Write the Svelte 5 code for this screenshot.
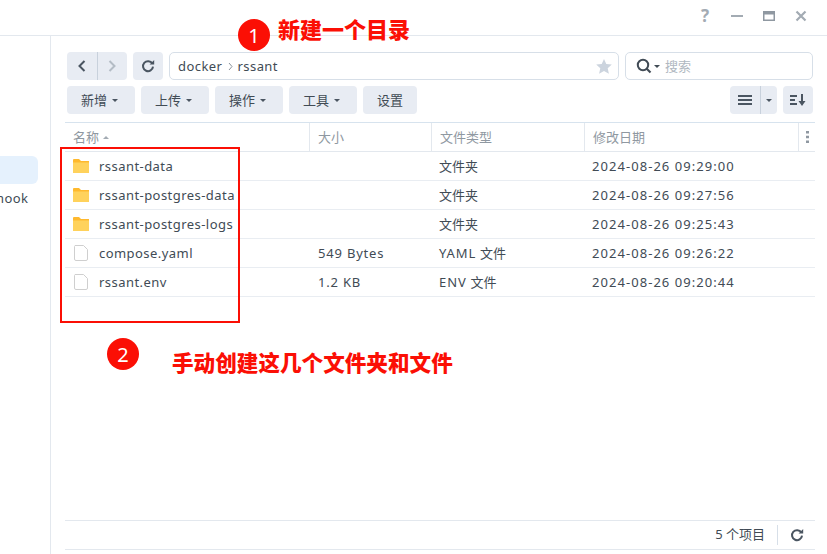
<script>
  const columns = [
    { label: '名称', width: 245, sort: true },
    { label: '大小', width: 122 },
    { label: '文件类型', width: 153 },
    { label: '修改日期', width: 214 }
  ];
  const files = [
    { name: 'rssant-data', size: '', kind: '', type: '文件夹', date: '2024-08-26 09:29:00', folder: true },
    { name: 'rssant-postgres-data', size: '', kind: '', type: '文件夹', date: '2024-08-26 09:27:56', folder: true },
    { name: 'rssant-postgres-logs', size: '', kind: '', type: '文件夹', date: '2024-08-26 09:25:43', folder: true },
    { name: 'compose.yaml', size: '549 Bytes', kind: 'YAML', type: '文件', date: '2024-08-26 09:26:22', folder: false },
    { name: 'rssant.env', size: '1.2 KB', kind: 'ENV', type: '文件', date: '2024-08-26 09:20:44', folder: false }
  ];
  const actions = [
    { label: '新增', menu: true },
    { label: '上传', menu: true },
    { label: '操作', menu: true },
    { label: '工具', menu: true },
    { label: '设置', menu: false }
  ];
</script>

{#snippet refresh(size)}
  <svg width={size} height={size} viewBox="0 0 14 14" fill="none">
    <path d="M11.3 4.6A5 5 0 1 0 12 7.6" stroke="#4a5561" stroke-width="2"/>
    <path d="M8.6 5.6h4.6V1z" fill="#4a5561"/>
  </svg>
{/snippet}

<div class="window">
  <header class="titlebar">
    <span class="help">?</span>
    <svg class="ctl" width="14" height="14" viewBox="0 0 14 14"><rect x="1" y="6" width="12" height="2" fill="#a3abb3"/></svg>
    <svg class="ctl" width="14" height="14" viewBox="0 0 14 14"><path d="M1 2h12v10H1zM2.5 5.5v5h9v-5z" fill="#8f98a1" fill-rule="evenodd"/></svg>
    <svg class="ctl" width="14" height="14" viewBox="0 0 14 14"><path d="M2.5 2.5l9 9M11.5 2.5l-9 9" stroke="#a3abb3" stroke-width="2.2"/></svg>
  </header>

  <div class="body">
    <aside class="sidebar">
      <div class="selected"></div>
      <div class="side-item">hook</div>
    </aside>

    <main class="main">
      <div class="toolbar">
        <div class="btn nav">
          <span class="nav-half divided">
            <svg width="12" height="14" viewBox="0 0 12 14" fill="none"><path d="M8.5 2L3.5 7l5 5" stroke="#4a5561" stroke-width="2"/></svg>
          </span>
          <span class="nav-half">
            <svg width="12" height="14" viewBox="0 0 12 14" fill="none"><path d="M3.5 2l5 5-5 5" stroke="#b4bcc5" stroke-width="2"/></svg>
          </span>
        </div>
        <div class="btn refresh">{@render refresh(14)}</div>
        <div class="field path">
          <span class="latin">docker</span>
          <svg class="crumb" width="7" height="9" viewBox="0 0 7 9" fill="none"><path d="M2 1l3 3.5L2 8" stroke="#8a939c" stroke-width="1"/></svg>
          <span class="latin">rssant</span>
          <svg class="star" width="16" height="15" viewBox="0 0 16 15"><path d="M8 0l2.3 5 5.5.6-4.1 3.700 1.200 5.400L8 12l-4.900 2.700 1.200-5.400L.2 5.600l5.500-.6z" fill="#ccd4de"/></svg>
        </div>
        <div class="field search">
          <svg width="16" height="16" viewBox="0 0 16 16" fill="none"><circle cx="7" cy="7" r="5.200" stroke="#414b55" stroke-width="2"/><path d="M10.500 10.500l4 4" stroke="#414b55" stroke-width="2.200"/></svg>
          <span class="caret dark"></span>
          <span class="placeholder">搜索</span>
        </div>
      </div>

      <div class="toolbar second">
        {#each actions as action}
          <div class="btn action" class:plain={!action.menu}>
            <span class="cjk">{action.label}</span>
            {#if action.menu}<span class="caret"></span>{/if}
          </div>
        {/each}
        <div class="spacer"></div>
        <div class="btn view">
          <span class="view-main">
            <svg width="14" height="10" viewBox="0 0 14 10"><path d="M0 0h14v2H0zM0 4h14v2H0zM0 8h14v2H0z" fill="#4a5561"/></svg>
          </span>
          <span class="view-menu"><span class="caret"></span></span>
        </div>
        <div class="btn sort">
          <svg width="16" height="12" viewBox="0 0 16 12"><path d="M0 1h7v2H0zM0 5h5v2H0zM0 9h7v2H0zM11 0h2v7h2.500L12 12 8.500 7H11z" fill="#4a5561"/></svg>
        </div>
      </div>

      <div class="table">
        <div class="thead">
          {#each columns as col}
            <div class="th" style="width: {col.width}px">
              <span class="cjk">{col.label}</span>
              {#if col.sort}<span class="sort-up"></span>{/if}
            </div>
          {/each}
          <div class="th more">
            <svg width="3" height="12" viewBox="0 0 3 12"><path d="M0 0h3v2.500H0zM0 4.700h3v2.500H0zM0 9.400h3v2.500H0z" fill="#8f98a1"/></svg>
          </div>
        </div>
        {#each files as file}
          <div class="row">
            <div class="cell name" style="width: {columns[0].width}px">
              {#if file.folder}
                <svg class="icon" width="16" height="14" viewBox="0 0 16 14"><path d="M0 1a1 1 0 0 1 1-1h5l2 2h8v12H0z" fill="#ffb92e"/><path d="M0 3.500h16V14H0z" fill="#ffd25c"/></svg>
              {:else}
                <svg class="icon" width="16" height="16" viewBox="0 0 16 16" fill="none"><path d="M2 .500h8.500L14.500 4.500V14a1.500 1.500 0 0 1-1.500 1.500H3A1.500 1.500 0 0 1 1.500 14V1.500z" stroke="#cfcfcf" fill="#fff"/></svg>
              {/if}
              <span class="latin">{file.name}</span>
            </div>
            <div class="cell size" style="width: {columns[1].width}px">{file.size}</div>
            <div class="cell type" style="width: {columns[2].width}px">
              {#if file.kind}<span class="kind">{file.kind}</span>{/if}
              <span class="cjk">{file.type}</span>
            </div>
            <div class="cell date" style="width: {columns[3].width}px">{file.date}</div>
          </div>
        {/each}
      </div>

      <footer class="footer">
        <span class="count"><span class="cjk">5 个项目</span></span>
        <span class="foot-refresh">{@render refresh(14)}</span>
      </footer>
    </main>
  </div>

  <div class="badge one">1</div>
  <div class="note one">新建一个目录</div>
  <div class="mark"></div>
  <div class="badge two">2</div>
  <div class="note two">手动创建这几个文件夹和文件</div>
</div>

<style>
  :global(body) {
    margin: 0;
    background: #fff;
  }
  .window {
    position: relative;
    width: 827px;
    height: 554px;
    overflow: hidden;
    display: flex;
    flex-direction: column;
    background: #fff;
    color: #414b55;
    font-family: "Noto Sans", "Noto Sans CJK SC", sans-serif;
    font-size: 13px;
  }
  .cjk {
    position: relative;
    top: -1px;
  }
  .latin {
    letter-spacing: 0.45px;
  }
  .size {
    letter-spacing: 0.8px;
  }
  .kind {
    letter-spacing: 0.9px;
    margin-right: 4px;
  }
  .date {
    letter-spacing: 1.05px;
  }
  .titlebar {
    flex: none;
    height: 36px;
    box-sizing: border-box;
    display: flex;
    align-items: center;
    justify-content: flex-end;
    gap: 18px;
    padding: 0 19px 4px 0;
    border-bottom: 1px solid #e3e8ee;
  }
  .help {
    font-size: 17px;
    font-weight: 700;
    line-height: 14px;
    color: #a3abb3;
    width: 14px;
    text-align: center;
  }
  .body {
    flex: 1;
    display: flex;
    min-height: 0;
  }
  .sidebar {
    flex: none;
    width: 51px;
    box-sizing: border-box;
    border-right: 1px solid #e3e8ee;
    padding-top: 120px;
    overflow: hidden;
  }
  .selected {
    width: 38px;
    height: 28px;
    background: #e5f1fd;
    border-radius: 0 6px 6px 0;
  }
  .side-item {
    margin-top: 4px;
    height: 20px;
    line-height: 20px;
    margin-left: -4px;
    white-space: nowrap;
    letter-spacing: 0.45px;
  }
  .main {
    flex: 1;
    min-width: 0;
    display: flex;
    flex-direction: column;
    padding: 16px 12px 4px 14px;
  }
  .toolbar {
    flex: none;
    display: flex;
    gap: 6px;
    height: 28px;
    padding: 0 2px;
  }
  .toolbar.second {
    margin-top: 6px;
  }
  .btn {
    flex: none;
    box-sizing: border-box;
    height: 28px;
    border-radius: 4px;
    background: #e8ecf3;
    display: flex;
    align-items: center;
    justify-content: center;
  }
  .nav {
    width: 60px;
  }
  .nav-half {
    flex: 1;
    height: 100%;
    display: flex;
    align-items: center;
    justify-content: center;
  }
  .divided {
    border-right: 1px solid #c8d1dc;
  }
  .refresh {
    width: 30px;
  }
  .field {
    box-sizing: border-box;
    height: 28px;
    border: 1px solid #d7dfe8;
    border-radius: 5px;
    display: flex;
    align-items: center;
  }
  .path {
    width: 450px;
    padding: 0 6px 0 8px;
  }
  .crumb {
    margin: 0 3px 0 5px;
  }
  .star {
    margin-left: auto;
  }
  .search {
    width: 188px;
    padding-left: 10px;
  }
  .placeholder {
    margin-left: 5px;
    color: #b0b8c1;
    position: relative;
    top: -1px;
  }
  .caret {
    display: inline-block;
    width: 0;
    height: 0;
    border-left: 3.500px solid transparent;
    border-right: 3.500px solid transparent;
    border-top: 3.500px solid #4a5561;
  }
  .caret.dark {
    margin-left: 2px;
    border-top-color: #414b55;
  }
  .action {
    width: 68px;
    gap: 5px;
    justify-content: flex-start;
    padding-left: 14px;
  }
  .action.plain {
    width: 54px;
  }
  .spacer {
    flex: 1;
  }
  .view {
    width: 47px;
  }
  .view-main {
    width: 31px;
    height: 100%;
    box-sizing: border-box;
    border-right: 1px solid #c8d1dc;
    display: flex;
    align-items: center;
    justify-content: center;
  }
  .view-menu {
    flex: 1;
    display: flex;
    align-items: center;
    justify-content: center;
  }
  .sort {
    width: 30px;
  }
  .table {
    flex: 1;
    margin-top: 8px;
    border-top: 1px solid #d7e3ee;
  }
  .thead {
    display: flex;
    height: 29px;
    box-sizing: border-box;
    border-bottom: 1px solid #e3e8ee;
  }
  .th {
    flex: none;
    box-sizing: border-box;
    display: flex;
    align-items: center;
    padding-left: 8px;
    color: #8f98a1;
    border-right: 1px solid #e3e8ee;
    gap: 4px;
  }
  .th.more {
    width: 16px;
    border-right: none;
    justify-content: center;
    padding: 0;
  }
  .sort-up {
    width: 0;
    height: 0;
    border-left: 3.500px solid transparent;
    border-right: 3.500px solid transparent;
    border-bottom: 3.500px solid #a3abb3;
  }
  .row {
    display: flex;
    height: 29px;
    box-sizing: border-box;
    border-bottom: 1px solid #e9edf2;
  }
  .cell {
    flex: none;
    box-sizing: border-box;
    display: flex;
    align-items: center;
    padding-left: 8px;
    white-space: nowrap;
  }
  .cell.type,
  .cell.date {
    padding-left: 7px;
  }
  .icon {
    flex: none;
    margin-right: 10px;
  }
  .footer {
    flex: none;
    height: 30px;
    box-sizing: border-box;
    border-top: 1px solid #e3e8ee;
    border-bottom: 1px solid #e3e8ee;
    display: flex;
    align-items: center;
    justify-content: flex-end;
  }
  .count {
    padding-right: 12px;
    border-right: 1px solid #d7dfe8;
    line-height: 20px;
    height: 20px;
  }
  .foot-refresh {
    width: 37px;
    display: flex;
    justify-content: center;
  }
  .badge {
    position: absolute;
    width: 32px;
    height: 32px;
    border-radius: 50%;
    background: #fb0f05;
    color: #fff;
    font-size: 20px;
    font-family: "Noto Sans", sans-serif;
    display: flex;
    align-items: center;
    justify-content: center;
  }
  .badge.one {
    left: 238px;
    top: 19px;
  }
  .badge.two {
    left: 107px;
    top: 338px;
  }
  .note {
    position: absolute;
    color: #fb0f05;
    font-family: "Noto Sans CJK SC", sans-serif;
    font-weight: 900;
    white-space: nowrap;
    line-height: 30px;
  }
  .note.one {
    left: 278px;
    top: 13px;
    font-size: 22px;
  }
  .note.two {
    left: 172px;
    top: 347px;
    font-size: 21.600px;
  }
  .mark {
    position: absolute;
    left: 60px;
    top: 147px;
    width: 180px;
    height: 176px;
    box-sizing: border-box;
    border: 2px solid #fb0f05;
  }
</style>
